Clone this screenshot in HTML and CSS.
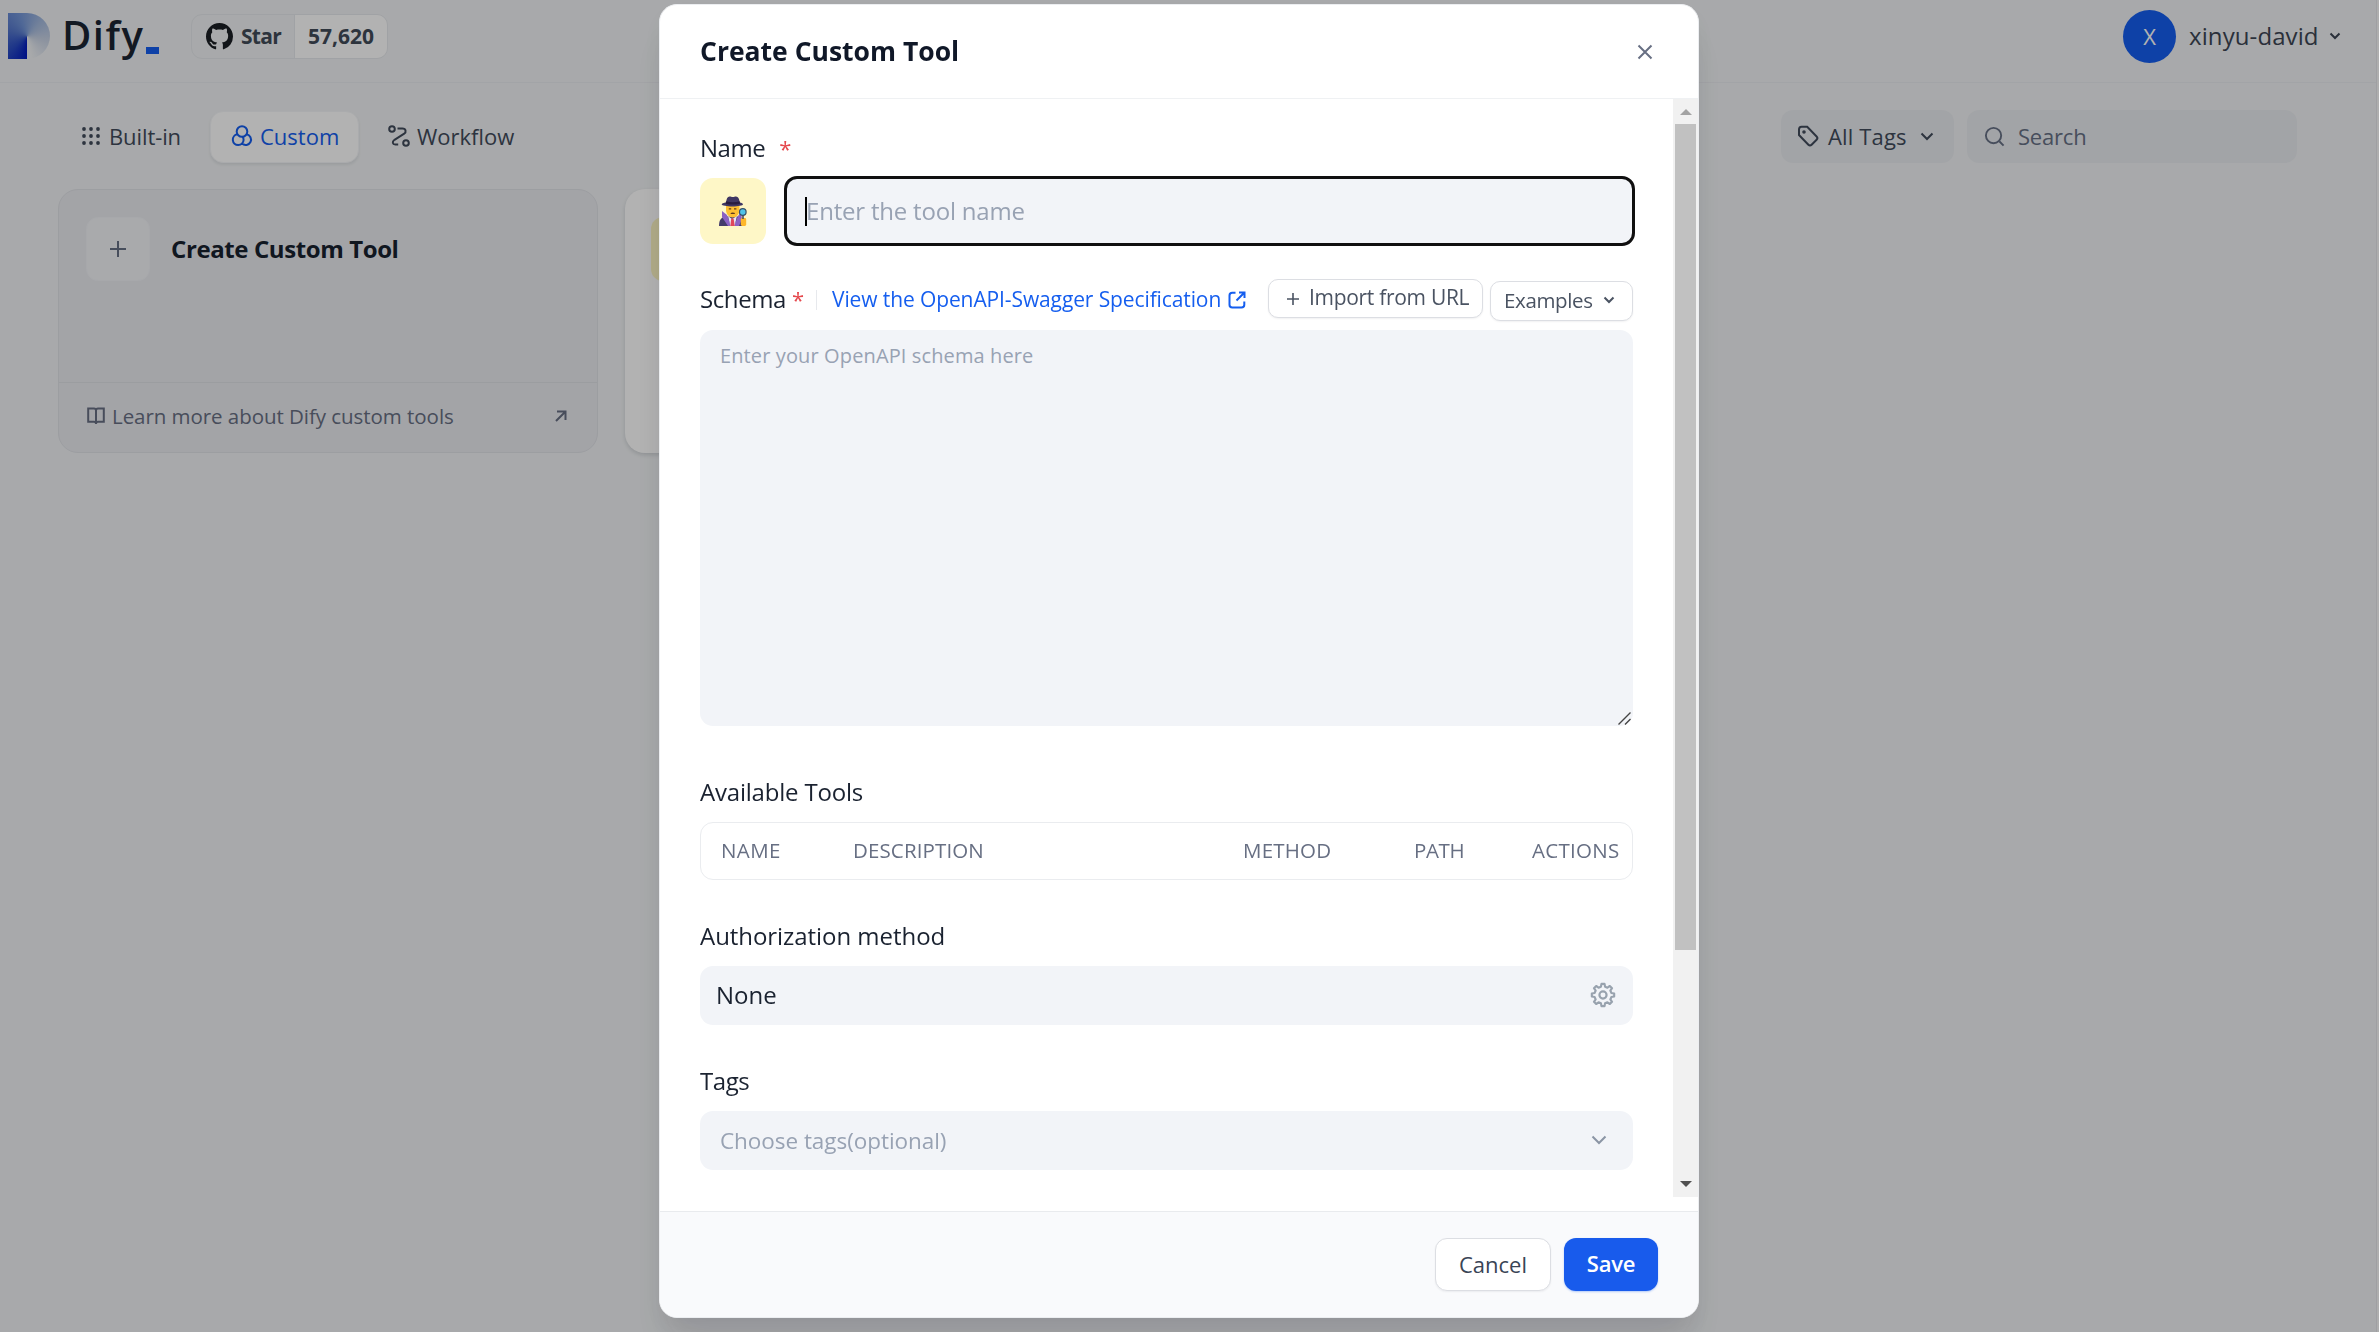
FILE: index.html
```html
<!DOCTYPE html>
<html lang="en">
<head>
<meta charset="utf-8">
<title>Dify - Create Custom Tool</title>
<link rel="stylesheet" href="styles.css">
</head>
<body>
<div class="app">
  <header class="topbar">
    <div class="logo-mark"></div>
    <div class="logo-text">Dify</div>
    <div class="logo-dash"></div>
    <div class="github">
      <div class="github-star">
        <svg class="github-icon" viewBox="0 0 16 16"><path fill="#1b1f24" d="M8 0C3.58 0 0 3.58 0 8c0 3.54 2.29 6.53 5.47 7.59.4.07.55-.17.55-.38 0-.19-.01-.82-.01-1.49-2.01.37-2.53-.49-2.69-.94-.09-.23-.48-.94-.82-1.13-.28-.15-.68-.52-.01-.53.63-.01 1.08.58 1.23.82.72 1.21 1.87.87 2.33.66.07-.52.28-.87.51-1.07-1.78-.2-3.64-.89-3.64-3.95 0-.87.31-1.59.82-2.15-.08-.2-.36-1.02.08-2.12 0 0 .67-.21 2.2.82.64-.18 1.32-.27 2-.27s1.36.09 2 .27c1.53-1.04 2.2-.82 2.2-.82.44 1.1.16 1.92.08 2.12.51.56.82 1.27.82 2.15 0 3.07-1.87 3.75-3.65 3.95.29.25.54.73.54 1.48 0 1.07-.01 1.93-.01 2.2 0 .21.15.46.55.38A8.01 8.01 0 0 0 16 8c0-4.42-3.58-8-8-8z"/></svg>
        <span class="star-label">Star</span>
      </div>
      <div class="github-count"><span class="count-label">57,620</span></div>
    </div>
    <div class="account">
      <div class="avatar">X</div>
      <span class="account-name">xinyu-david</span>
      <svg class="chev-sm" viewBox="0 0 12 8"><path d="M1.500 1.500 6 6l4.500-4.500"/></svg>
    </div>
  </header>

  <main class="page">
    <nav class="toolbar">
      <div class="tab">
        <svg class="tab-icon dots" viewBox="0 0 22 22"><circle cx="4" cy="4" r="1.900"/><circle cx="11" cy="4" r="1.900"/><circle cx="18" cy="4" r="1.900"/><circle cx="4" cy="11" r="1.900"/><circle cx="11" cy="11" r="1.900"/><circle cx="18" cy="11" r="1.900"/><circle cx="4" cy="18" r="1.900"/><circle cx="11" cy="18" r="1.900"/><circle cx="18" cy="18" r="1.900"/></svg>
        <span class="tab-builtin">Built-in</span>
      </div>
      <div class="tab tab-active">
        <svg class="tab-icon" viewBox="0 0 22 22"><circle cx="11" cy="6.500" r="5.300"/><path d="M6.400 9.300A5.400 5.400 0 1 0 12.600 14.900c0-1.300-.4-2.300-1.100-3.200M15.600 9.300A5.400 5.400 0 1 1 11 18.600"/></svg>
        <span class="tab-custom">Custom</span>
      </div>
      <div class="tab">
        <svg class="tab-icon" viewBox="0 0 22 22"><circle cx="4" cy="4" r="2.800"/><circle cx="18" cy="18" r="2.800"/><path d="M9.500 3.500h5c3.500 0 4 3.500 1.700 5.200l-9.700 6.100c-2.700 1.900-2 4.700.8 4.700h2.900"/></svg>
        <span class="tab-workflow">Workflow</span>
      </div>
      <div class="filters">
        <div class="tag-filter">
          <svg class="tab-icon" viewBox="0 0 22 22"><path d="M2 4.500V10l9.400 9.700c1 1 2.200 1 3.200 0l5-5c1-1 1-2.200 0-3.200L10.200 1.700H4.500C2.800 1.700 2 2.700 2 4.500z"/><circle cx="7" cy="7" r=".8" fill="currentColor"/></svg>
          <span class="tags-label">All Tags</span>
          <svg class="chev-md" viewBox="0 0 14 9"><path d="M1.500 1.500 7 7l5.500-5.500"/></svg>
        </div>
        <div class="search">
          <svg class="search-icon" viewBox="0 0 22 22"><circle cx="10" cy="10" r="8"/><path d="m16 16 4.500 4.500"/></svg>
          <span class="search-label">Search</span>
        </div>
      </div>
    </nav>
    <section class="cards">
      <article class="card card-create">
        <div class="card-main">
          <div class="plus-box"><svg class="plus-lg" viewBox="0 0 16 16"><path d="M8 0v16M0 8h16"/></svg></div>
          <span class="card-title">Create Custom Tool</span>
        </div>
        <div class="card-foot">
          <svg class="book" viewBox="0 0 18 18"><path d="M9 3.500C9 2 8 1.500 7 1.500H1.200v13.300H7c1 0 2 .6 2 2M9 3.500C9 2 10 1.500 11 1.500h5.800v13.300H11c-1 0-2 .6-2 2zV17"/></svg>
          <span class="learn">Learn more about Dify custom tools</span>
          <svg class="arrow-ne" viewBox="0 0 12 12"><path d="M2 1.500h8.500V10M10.300 1.700 1 11"/></svg>
        </div>
      </article>
      <article class="card card-tool"><div class="tool-icon"></div></article>
    </section>
  </main>
  <div class="edge"></div>
</div>

<div class="backdrop">
  <div class="modal">
    <div class="modal-head">
      <h1 class="modal-title">Create Custom Tool</h1>
      <svg class="close" viewBox="0 0 16 16"><path d="m1.500 1.500 13 13M14.500 1.500l-13 13"/></svg>
    </div>
    <div class="modal-body">
      <form class="form">
        <div class="label"><span class="l-name">Name</span><span class="req req-name">*</span></div>
        <div class="name-row">
          <div class="emoji">
            <svg viewBox="-1 -1 30 32">
              <path fill="#433b6b" d="M0 30c0-5 1.500-8.500 6-9.500h14c2 1 3 4.500 3 9.500z"/>
              <path fill="#8b62c4" d="m3 15 5 4 4 11H9L3 21zM22 16l-3 4-4 10h5l3-7z"/>
              <path fill="#e9e2f2" d="m9 20 4 3 5-3-2.500 10h-4z"/>
              <path fill="#e0475b" d="M12.200 22.500h2.400l1.200 7.500h-4.400z"/>
              <path fill="#fdc033" d="M7 9h13.500v5c0 4-3 7.500-6.700 7.500S7 18 7 14z"/>
              <path fill="#5f3a1c" d="M9.800 12.200h2.400v1.300H9.800zM15 12.200h2.400v1.300H15zM11.500 17c1.500-.8 3-.8 4.500 0l-.4.900h-3.700z"/>
              <path fill="#3f3763" d="M7 6.500C7.500 2.500 8.500.5 10.500.5c1.500 0 2 .6 3.300.6s2-.6 3.300-.6c2 0 3.200 2 3.700 6 1.800.3 3.200.9 3.200 1.700 0 1.300-5 2.200-10.500 2.200S2.700 9.500 2.700 8.200c0-.8 2-1.400 4.300-1.700z"/>
              <path fill="#281d40" d="M7 5.300c4 1.300 9.500 1.300 13.700 0l.3 2.400c-4.500 1.200-10 1.200-14.300 0z"/>
              <rect x="21.800" y="22" width="5.400" height="8" rx="1.400" fill="#fdb72a"/>
              <path stroke="#4b4b55" stroke-width="1.600" d="M24 19v4"/>
              <circle cx="23.800" cy="16" r="3.300" fill="#4fc3e8" stroke="#35506a" stroke-width="1.200"/>
            </svg>
          </div>
          <div class="name-input"><span class="caret"></span><span class="ph ph-name">Enter the tool name</span></div>
        </div>
        <div class="schema-row">
          <span class="l-schema">Schema</span><span class="req req-schema">*</span>
          <span class="vline"></span>
          <a class="spec">View the OpenAPI-Swagger Specification</a>
          <svg class="ext" viewBox="0 0 18 18"><path d="M7.500 1.800H4.300C2.500 1.800 1.500 2.700 1.500 4.500v9.200c0 1.800 1 2.800 2.800 2.800h9.200c1.800 0 2.800-1 2.800-2.800v-3.200M11 1.500h5.500V7M16.200 1.800 8.500 9.500"/></svg>
          <div class="btn-sm btn-import"><svg class="plus-sm" viewBox="0 0 12 12"><path d="M6 0v12M0 6h12"/></svg><span class="import-label">Import from URL</span></div>
          <div class="btn-sm btn-examples"><span class="examples-label">Examples</span><svg class="chev-sm" viewBox="0 0 12 8"><path d="M1.500 1.500 6 6l4.500-4.500"/></svg></div>
        </div>
        <div class="schema-box">
          <span class="ph ph-schema">Enter your OpenAPI schema here</span>
          <svg class="grip" viewBox="0 0 13 13"><path d="M.5 12.500 12.500.5M7 12.500 12.500 7"/></svg>
        </div>
        <div class="label mt-tools"><span class="l-tools">Available Tools</span></div>
        <div class="table-head">
          <span class="c-name">NAME</span><span class="c-desc">DESCRIPTION</span><span class="c-method">METHOD</span><span class="c-path">PATH</span><span class="c-actions">ACTIONS</span>
        </div>
        <div class="label mt"><span class="l-auth">Authorization method</span></div>
        <div class="field">
          <span class="none">None</span>
          <svg class="gear" viewBox="0 0 24 24"><path d="M10.600 1.700h2.800l.5 2.600 2.200.9 2.200-1.500 2 2-1.500 2.200.9 2.200 2.600.5v2.800l-2.600.5-.9 2.200 1.500 2.200-2 2-2.200-1.500-2.200.9-.5 2.600h-2.800l-.5-2.600-2.200-.9-2.200 1.500-2-2 1.500-2.200-.9-2.200-2.600-.5v-2.800l2.600-.5.9-2.200-1.500-2.200 2-2 2.200 1.500 2.200-.9z"/><circle cx="12" cy="12" r="3.300"/></svg>
        </div>
        <div class="label mt"><span class="l-tags">Tags</span></div>
        <div class="field field-tags">
          <span class="choose">Choose tags(optional)</span>
          <svg class="chev-lg" viewBox="0 0 16 10"><path d="m1.500 1.500 6.500 6.500 6.500-6.500"/></svg>
        </div>
      </form>
      <div class="scrollbar"><i class="arrow up"></i><i class="thumb"></i><i class="arrow down"></i></div>
    </div>
    <div class="modal-foot">
      <div class="btn btn-cancel">Cancel</div>
      <div class="btn btn-save">Save</div>
    </div>
  </div>
</div>
</body>
</html>
```

FILE: styles.css
```css
* { box-sizing: border-box; }
html, body { margin: 0; height: 100%; overflow: hidden; }
body { font-family: "Open Sans", "Noto Sans", sans-serif; color: #101828; background: #f2f4f7; }
svg { display: block; flex: none; fill: none; stroke: currentColor; stroke-width: 2; }
span, a, h1 { white-space: nowrap; }

.app { position: relative; height: 1332px; background: #f1f3f5; }
.edge { position: absolute; right: 0; top: 0; width: 3px; height: 1332px; background: #fafafa; border-left: 1px solid #e4e6ea; }

/* Top bar */
.topbar { display: flex; align-items: center; height: 83px; padding: 0 38px 10px 8px; border-bottom: 1px solid #e9ebef; }
.logo-mark { width: 42px; height: 46px; margin-right: 12px; border-radius: 0 23px 23px 0; background: conic-gradient(from 180deg at 46% 51%, #0018c0, #2a4cc4 50deg, #5577cc 110deg, #7396d8 160deg, #a3b9de 220deg, #c8d2e4 280deg, #f1f3f5 350deg); }
.logo-text { width: 84px; padding-bottom: 2px; font-size: 40px; line-height: 46px; font-weight: 600; letter-spacing: 1.500px; color: #1b2533; }
.logo-dash { width: 13px; height: 7px; margin: 29px 0 0; background: #155eef; }
.github { display: flex; width: 197px; height: 45px; margin-left: 32px; border: 1px solid #e6e8ec; border-radius: 11px; overflow: hidden; font-size: 21px; font-weight: 700; color: #414b58; }
.github-star { display: flex; align-items: center; width: 103px; padding-left: 14px; border-right: 1px solid #e6e8ec; }
.github-icon { width: 27px; height: 27px; margin-right: 8px; stroke: none; }
.star-label { letter-spacing: -.7px; }
.github-count { flex: 1; padding-left: 13px; line-height: 42px; background: #fff; }
.account { display: flex; align-items: center; margin-left: auto; color: #3d4654; }
.avatar { width: 53px; height: 53px; margin-right: 13px; border-radius: 50%; background: #155eef; color: #fff; font-size: 22px; line-height: 52px; text-align: center; }
.account-name { width: 140px; padding-bottom: 1px; font-size: 24px; letter-spacing: .1px; }
.chev-sm { width: 12px; height: 8px; }
.chev-md { width: 14px; height: 9px; }
.chev-lg { width: 16px; height: 10px; }

/* Page toolbar */
.page { padding: 27px 82px 0 58px; }
.toolbar { display: flex; height: 53px; align-items: center; font-size: 22px; line-height: 30px; color: #414b5b; }
.toolbar span { padding-bottom: 2px; }
.toolbar .tab-icon, .toolbar .search-icon { margin-bottom: 1px; }
.tab { display: flex; align-items: center; height: 52px; padding: 0 20px; border-radius: 13px; gap: 7px; }
.tab-icon { width: 22px; height: 22px; }
.dots { fill: currentColor; stroke: none; }
.tab-builtin { letter-spacing: -.1px; }
.tab-active { width: 149px; background: #fff; color: #155eef; border: 1px solid #f4f5f8; box-shadow: 0 2px 3px rgba(16,24,40,.08); }
.tab:first-child { width: 152px; padding-left: 22px; }
.tab:nth-child(3) { margin-left: 9px; }
.filters { display: flex; gap: 13px; margin-left: auto; }
.tag-filter, .search { display: flex; align-items: center; height: 53px; border-radius: 12px; background: #e9ebf0; }
.tag-filter { width: 173px; padding: 0 20px 0 16px; }
.tags-label { margin-left: 9px; letter-spacing: .15px; }
.tag-filter .chev-md { margin-left: auto; }
.search { width: 330px; padding-left: 17px; color: #667085; }
.search-icon { width: 21px; height: 21px; margin-right: 13px; }
.search-label { letter-spacing: -.2px; }

/* Cards */
.cards { display: flex; gap: 27px; margin-top: 26px; }
.card { width: 540px; height: 264px; border-radius: 20px; }
.card-create { border: 1px solid #e0e2e7; background: #eaebf0; }
.card-main { display: flex; height: 192px; padding: 27px; line-height: 64px; }
.plus-box { display: grid; place-items: center; width: 64px; height: 64px; margin-right: 21px; border-radius: 12px; background: #f2f4f7; border: 1px solid #eff1f5; color: #667085; }
.plus-lg { width: 16px; height: 16px; }
.card-title { font-size: 24px; font-weight: 700; letter-spacing: -.4px; color: #18222f; }
.card-foot { display: flex; align-items: center; height: 69px; padding: 0 30px 2px 28px; border-top: 1px solid #dfe1e6; font-size: 20.500px; color: #676f83; }
.book { width: 18px; height: 18px; margin-right: 7px; }
.learn { letter-spacing: -.05px; }
.arrow-ne { width: 12px; height: 12px; margin-left: auto; }
.card-tool { background: #fff; padding: 28px 26px; box-shadow: 0 2px 4px rgba(16,24,40,.15); }
.tool-icon { width: 64px; height: 64px; border-radius: 12px; background: #fef7c3; }

/* Modal */
.backdrop { position: fixed; inset: 0; display: flex; justify-content: center; align-items: flex-start; padding: 4px 21px 0 0; background: rgba(0,0,0,.3); }
.modal { display: flex; flex-direction: column; width: 1040px; height: 1314px; border-radius: 18px; border: 1px solid #eceef1; background: #fff; box-shadow: 0 30px 36px -6px rgba(16,24,40,.1), 0 10px 24px rgba(16,24,40,.05); overflow: hidden; }
.modal-head { display: flex; align-items: center; justify-content: space-between; height: 94px; padding: 0 45px 0 40px; border-bottom: 1px solid #eff1f3; flex: none; }
.modal-title { margin: 0; padding-bottom: 2px; font-size: 26.500px; line-height: 40px; font-weight: 700; letter-spacing: 0; }
.close { width: 16px; height: 16px; color: #676f83; }
.modal-body { display: flex; justify-content: space-between; height: 1112px; flex: none; }
.form { width: 975px; padding: 31px 0 0 40px; }
.label { display: flex; height: 36px; line-height: 36px; font-size: 24px; letter-spacing: -.2px; color: #1a2230; }
.l-name, .l-tags { letter-spacing: -.45px; }
.l-auth { letter-spacing: -.05px; }
.req { color: #e5484d; font-size: 22px; }
.req-name { margin-left: 14px; }
.name-row { display: flex; margin-top: 10px; }
.emoji { display: grid; place-items: center; width: 66px; height: 66px; margin: 2px 18px 0 0; border-radius: 13px; background: #fef7c7; }
.emoji svg { width: 30px; height: 32px; stroke: none; }
.name-input { display: flex; align-items: center; width: 851px; height: 70px; padding-left: 18px; border: 3px solid #101010; border-radius: 13px; background: #f2f4f8; }
.caret { width: 2px; height: 29px; margin-right: -1px; background: #000; }
.ph { color: #98a2b3; font-size: 24px; }
.ph-name { padding-bottom: 2px; letter-spacing: -.2px; }
.schema-row { display: flex; align-items: flex-start; height: 42px; margin-top: 33px; line-height: 40px; font-size: 24px; color: #1a2230; }
.l-schema { width: 87px; letter-spacing: -.4px; }
.req-schema { width: 24px; margin-left: 5px; }
.vline { width: 1px; height: 20px; margin: 11px 15px 0 0; background: #e7e9ed; }
.spec { width: 396px; font-size: 21px; letter-spacing: -.11px; color: #155eef; }
.ext { width: 18px; height: 18px; margin-top: 12px; color: #155eef; }
.btn-sm { display: flex; align-items: center; border: 1px solid #dcdee3; border-radius: 10px; background: #fff; box-shadow: 0 1px 2px rgba(16,24,40,.06); font-size: 21px; color: #4a5362; }
.btn-import { width: 215px; height: 39px; margin-left: auto; padding-left: 18px; line-height: 35px; }
.plus-sm { width: 12px; height: 12px; margin-right: 10px; stroke-width: 1.6; }
.import-label { height: 38px; letter-spacing: -.3px; }
.btn-examples { width: 143px; height: 40px; margin: 2px 2px 0 7px; padding: 0 17px 2px 13px; justify-content: space-between; }
.examples-label { font-size: 20.500px; letter-spacing: -.35px; }
.schema-box { position: relative; width: 933px; height: 396px; margin-top: 9px; padding: 10px 20px; border-radius: 13px; background: #f2f4f8; line-height: 32px; }
.ph-schema { font-size: 20px; letter-spacing: .12px; }
.grip { position: absolute; right: 2px; bottom: 1px; width: 13px; height: 13px; color: #444; stroke-width: 1.4; }
.mt-tools { margin-top: 48px; }
.mt { margin-top: 38px; }
.table-head { display: flex; width: 933px; height: 58px; margin-top: 12px; padding-left: 20px; border: 1px solid #eaecef; border-radius: 13px; font-size: 20.500px; line-height: 54px; color: #676f83; }
.c-name { width: 132px; letter-spacing: .4px; }
.c-desc { width: 390px; letter-spacing: .12px; }
.c-method { width: 171px; letter-spacing: .2px; }
.c-path { width: 118px; letter-spacing: -.4px; }
.c-actions { letter-spacing: .3px; }
.field { display: flex; align-items: center; justify-content: space-between; width: 933px; height: 59px; margin-top: 12px; padding: 0 17px 2px 16px; border-radius: 13px; background: #f2f4f8; font-size: 24px; color: #1a2230; }
.gear { width: 26px; height: 26px; color: #98a2ae; stroke-linejoin: round; }
.field-tags { padding: 0 26px 0 20px; color: #98a2b3; font-size: 22.500px; letter-spacing: -.05px; }
.field-tags .chev-lg { color: #8b95a5; margin-bottom: 2px; }
.scrollbar { width: 25px; height: 1098px; background: #f1f1f1; display: flex; flex-direction: column; align-items: center; }
.thumb { width: 21px; height: 826px; margin-top: 9px; background: #c1c1c1; }
.arrow { width: 0; height: 0; border: 6px solid transparent; }
.up { margin-top: 4px; border-bottom-color: #a3a3a3; }
.down { margin-top: auto; margin-bottom: 4px; border-top-color: #505050; }
.modal-foot { display: flex; justify-content: flex-end; align-items: flex-start; flex: 1; padding: 26px 40px 0 0; border-top: 1px solid #e9ebee; background: #f9fafc; }
.btn { height: 53px; border-radius: 12px; font-size: 22px; line-height: 51px; text-align: center; }
.btn-cancel { width: 116px; margin-right: 13px; border: 1px solid #dcdee3; background: #fff; color: #394455; box-shadow: 0 1px 2px rgba(16,24,40,.06); }
.btn-save { width: 94px; background: #185bec; color: #fff; font-weight: 600; letter-spacing: -.2px; box-shadow: 0 1px 2px rgba(21,94,239,.3); }
```
